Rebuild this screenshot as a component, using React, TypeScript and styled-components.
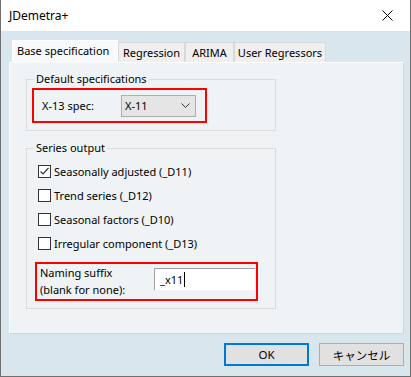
import React from "react";
import styled, { createGlobalStyle } from "styled-components";

const GlobalStyle = createGlobalStyle`
  html, body {
    margin: 0;
    padding: 0;
    background: #ffffff;
  }
  * {
    box-sizing: border-box;
  }
`;

const Window = styled.div`
  width: 411px;
  height: 377px;
  display: flex;
  flex-direction: column;
  border: 1px solid #707070;
  border-top: none;
  font-family: "Noto Sans", "Open Sans", sans-serif;
  font-size: 11px;
  color: #000;
`;

const TitleBar = styled.div`
  height: 31px;
  flex: none;
  background: #ffffff;
  display: flex;
  align-items: center;
  justify-content: space-between;
  padding-left: 8px;
`;

const Title = styled.span`
  font-size: 12px;
`;

const CloseButton = styled.div`
  width: 46px;
  height: 31px;
  display: flex;
  align-items: center;
  justify-content: center;
`;

const Body = styled.div`
  flex: 1;
  background: #dae6ee;
  display: flex;
  flex-direction: column;
  padding: 9px 6px 10px 8px;
`;

const TabStrip = styled.div`
  display: flex;
  align-items: flex-end;
  height: 22px;
  padding-left: 3px;
`;

const Tab = styled.div<{ $active?: boolean; $width: number }>`
  width: ${(p) => p.$width}px;
  height: ${(p) => (p.$active ? 23 : 20)}px;
  padding: 0 0 0 ${(p) => (p.$active ? 4 : 0)}px;
  display: flex;
  justify-content: ${(p) => (p.$active ? "flex-start" : "center")};
  align-items: ${(p) => (p.$active ? "flex-start" : "center")};
  padding-top: ${(p) => (p.$active ? 2 : 0)}px;
  background: ${(p) => (p.$active ? "#f7f9fb" : "#efefef")};
  border: 1px solid ${(p) => (p.$active ? "#ffffff" : "#d9d9d9")};
  border-bottom: none;
  margin-bottom: ${(p) => (p.$active ? -1 : 0)}px;
  position: relative;
  z-index: ${(p) => (p.$active ? 1 : 0)};
  white-space: nowrap;
`;

const Panel = styled.div`
  height: 272px;
  background: #eff3f6;
  border: 1px solid #ffffff;
  border-right-color: #d0d6da;
  border-bottom-color: #d0d6da;
  padding: 8px 0 0 16px;
  display: flex;
  flex-direction: column;
  gap: 9px;
`;

const GroupBox = styled.fieldset`
  width: 250px;
  margin: 0;
  padding: 1px 8px 7px 5px;
  border: 1px solid #dcdcdc;
  min-width: 0;
`;

const Legend = styled.legend`
  padding: 0 2px;
  margin-left: 2px;
  font-size: 11px;
  line-height: 16px;
`;

const Highlight = styled.div<{ $width: number; $height: number }>`
  width: ${(p) => p.$width}px;
  height: ${(p) => p.$height}px;
  border: 2px solid #ff0000;
  display: flex;
  align-items: center;
`;

const SuffixBox = styled(Highlight)`
  margin-top: 7px;
  margin-left: 3px;
  align-items: flex-start;
`;

const SpecLabel = styled.span`
  margin-left: 8px;
  width: 79px;
`;

const Combo = styled.div`
  width: 75px;
  height: 22px;
  background: #e5e5e5;
  border: 1px solid #adadad;
  display: flex;
  align-items: center;
  justify-content: space-between;
  padding: 0 5px 0 3px;
`;

const CheckList = styled.div`
  display: flex;
  flex-direction: column;
  padding-left: 6px;
  padding-top: 2px;
`;

const CheckRow = styled.label`
  height: 24px;
  display: flex;
  align-items: center;
  gap: 3px;
`;

const Box = styled.span`
  width: 13px;
  height: 13px;
  border: 1px solid #333333;
  background: #ffffff;
  display: flex;
  align-items: center;
  justify-content: center;
`;

const SuffixLabel = styled.div`
  margin-left: 3px;
  width: 114px;
  line-height: 17px;
`;

const SuffixInput = styled.div`
  width: 101px;
  height: 22px;
  background: #ffffff;
  border-top: 1px solid #a0a0a0;
  border-left: 1px solid #a0a0a0;
  display: flex;
  align-items: center;
  padding-left: 5px;
  margin-top: 4px;
`;

const Caret = styled.span`
  display: inline-block;
  width: 1px;
  height: 15px;
  background: #000;
  margin-left: 1px;
`;

const ButtonRow = styled.div`
  display: flex;
  justify-content: flex-end;
  gap: 10px;
  margin-top: 9px;
`;

const Button = styled.div<{ $default?: boolean }>`
  width: 85px;
  height: 23px;
  background: #e1e1e1;
  border: ${(p) => (p.$default ? "2px solid #0078d7" : "1px solid #adadad")};
  display: flex;
  align-items: center;
  justify-content: center;
  font-family: "Noto Sans", "Noto Sans CJK JP", sans-serif;
  font-size: 11.5px;
`;

const Check = ({ checked }: { checked?: boolean }) => (
  <Box>
    {checked && (
      <svg width="11" height="11" viewBox="0 0 11 11">
        <polyline points="1.5,5.5 4,8 9.5,2" fill="none" stroke="#333" strokeWidth="1.2" />
      </svg>
    )}
  </Box>
);

const tabs = [
  { label: "Base specification", width: 106, active: true },
  { label: "Regression", width: 67 },
  { label: "ARIMA", width: 49 },
  { label: "User Regressors", width: 92 },
];

const outputs = [
  { label: "Seasonally adjusted (_D11)", checked: true },
  { label: "Trend series (_D12)" },
  { label: "Seasonal factors (_D10)" },
  { label: "Irregular component (_D13)" },
];

export default function App() {
  return (
    <>
      <GlobalStyle />
      <Window>
        <TitleBar>
          <Title>JDemetra+</Title>
          <CloseButton>
            <svg width="11" height="11" viewBox="0 0 11 11">
              <path d="M0.5 0.5L10.5 10.5M10.5 0.5L0.5 10.5" stroke="#000" strokeWidth="1" />
            </svg>
          </CloseButton>
        </TitleBar>
        <Body>
          <TabStrip>
            {tabs.map((t) => (
              <Tab key={t.label} $active={t.active} $width={t.width}>
                {t.label}
              </Tab>
            ))}
          </TabStrip>
          <Panel>
            <GroupBox>
              <Legend>Default specifications</Legend>
              <Highlight $width={175} $height={35}>
                <SpecLabel>X-13 spec:</SpecLabel>
                <Combo>
                  <span>X-11</span>
                  <svg width="9" height="5" viewBox="0 0 9 5">
                    <polyline points="0.5,0.5 4.5,4.5 8.5,0.5" fill="none" stroke="#333" strokeWidth="1" />
                  </svg>
                </Combo>
              </Highlight>
            </GroupBox>
            <GroupBox>
              <Legend>Series output</Legend>
              <CheckList>
                {outputs.map((o) => (
                  <CheckRow key={o.label}>
                    <Check checked={o.checked} />
                    {o.label}
                  </CheckRow>
                ))}
              </CheckList>
              <SuffixBox $width={223} $height={39}>
                <SuffixLabel>
                  Naming suffix
                  <br />
                  (blank for none):
                </SuffixLabel>
                <SuffixInput>
                  _x11
                  <Caret />
                </SuffixInput>
              </SuffixBox>
            </GroupBox>
          </Panel>
          <ButtonRow>
            <Button $default>OK</Button>
            <Button>キャンセル</Button>
          </ButtonRow>
        </Body>
      </Window>
    </>
  );
}
